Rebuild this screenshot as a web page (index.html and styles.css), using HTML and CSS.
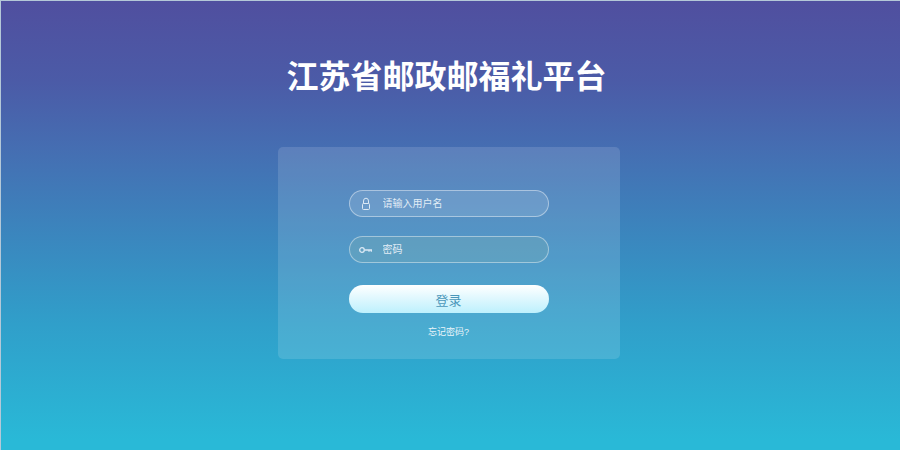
FILE: index.html
```html
<!DOCTYPE html>
<html lang="zh-CN">
<head>
  <meta charset="UTF-8">
  <meta name="viewport" content="width=device-width, initial-scale=1.0">
  <title>江苏省邮政邮福礼平台</title>
  <link rel="stylesheet" href="styles.css">
</head>
<body>

<main class="page">
  <h1 class="title">江苏省邮政邮福礼平台</h1>

  <form class="login-box">
    <label class="field">
      <svg class="icon" viewBox="0 0 14 14" aria-hidden="true">
        <path d="M4.5 6.5V4a2.5 2.8 0 0 1 5 0v2.5"/>
        <rect x="3.5" y="6.5" width="7" height="6" rx="1"/>
      </svg>
      <input type="text" name="username" placeholder="请输入用户名" aria-label="请输入用户名">
    </label>

    <label class="field field-password">
      <svg class="icon icon-key" viewBox="0 0 14 14" aria-hidden="true">
        <circle cx="3" cy="7" r="2.3"/>
        <path d="M5.5 7H13M10 7v1.7M12.3 7v1.7"/>
      </svg>
      <input type="password" name="password" placeholder="密码" aria-label="密码">
    </label>

    <button class="login-btn" type="submit">登录</button>
    <a class="forgot" href="#">忘记密码?</a>
  </form>
</main>

</body>
</html>
```

FILE: styles.css
```css
* {
  box-sizing: border-box;
}

body {
  margin: 0;
  font-family: "Liberation Sans", "Noto Sans CJK SC", sans-serif;
  color: #fff;
}

.page {
  min-height: 100vh;
  padding: 52px 4px 20px 0;
  border-top: 1px solid #b4c8d8;
  border-left: 1px solid #b4c8d8;
  background: linear-gradient(#504f9f, #4b5ba7 18%, #456eb2 33%, #309fca 72%, #29b9d7 98%);
  display: flex;
  flex-direction: column;
  align-items: center;
}

.title {
  margin: 0 0 46px;
  padding-right: 4px;
  font-size: 32px;
  line-height: 48px;
  font-weight: bold;
}

.login-box {
  width: 100%;
  max-width: 342px;
  padding: 43px 71px 20px;
  border-radius: 5px;
  background: rgba(255, 255, 255, 0.13);
  display: flex;
  flex-direction: column;
}

.field {
  display: flex;
  align-items: center;
  height: 27px;
  margin-bottom: 19px;
  padding: 0 9px;
  border: 1px solid rgba(255, 255, 255, 0.42);
  border-radius: 14px;
  background: rgba(255, 255, 255, 0.12);
}

.field-password {
  background: rgba(130, 175, 175, 0.28);
}

.icon {
  flex: none;
  width: 14px;
  height: 14px;
  margin-right: 10px;
  fill: none;
  stroke: #dbe9f5;
}

.icon-key {
  stroke-width: 1.3;
}

.field input {
  flex: 1;
  min-width: 0;
  padding: 0;
  border: none;
  outline: none;
  background: none;
  font-family: inherit;
  font-size: 10px;
  color: #fff;
}

.field input::placeholder {
  color: #e2edf6;
  opacity: 1;
}

.login-btn {
  height: 28px;
  margin: 3px 0 12px;
  padding: 0;
  border: none;
  border-radius: 14px;
  background: linear-gradient(#fff, #bdf0fd);
  font-family: inherit;
  font-size: 13px;
  color: #4a97ba;
  cursor: pointer;
}

.forgot {
  align-self: center;
  font-size: 9px;
  line-height: 14px;
  color: #eaf5fa;
  text-decoration: none;
}
```
